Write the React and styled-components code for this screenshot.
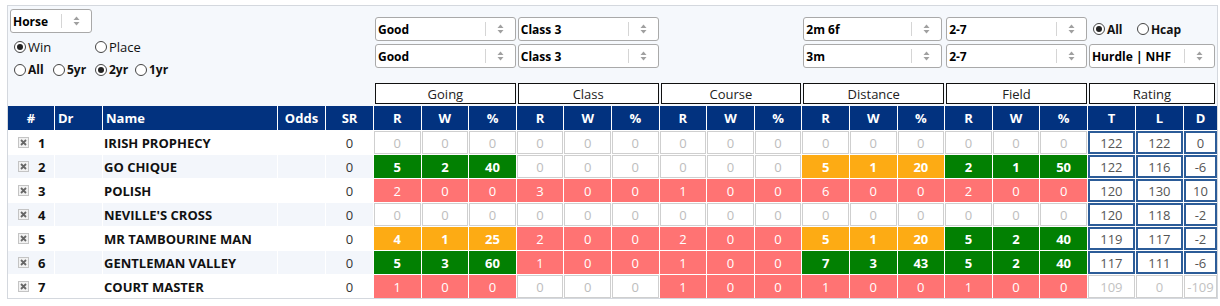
import React from 'react';
import styled, { createGlobalStyle, css } from 'styled-components';

const GlobalStyle = createGlobalStyle`
  body {
    margin: 0;
    background: #fff;
    font-family: "Open Sans", "Liberation Sans", sans-serif;
    color: #111;
  }
`;

const COLS = '46px 47px 174px 47px 47px repeat(15, 46.6px) 47px 47px 1fr';

const Panel = styled.div`
  width: 1209px;
  margin: 5px 0 0 7px;
  border: 1px solid #d4d8de;
  background: #f5f8fc;
`;

const Top = styled.div`
  display: grid;
  grid-template-columns: ${COLS};
  grid-template-rows: 8px 24px 24px 9px 21px;
  column-gap: 1px;
  row-gap: 3px;
`;

const LeftControls = styled.div`
  grid-column: 1 / span 5;
  grid-row: 1 / span 5;
  padding: 3px 0 0 1px;
  display: flex;
  flex-direction: column;
  align-items: flex-start;
`;

const SelectBox = styled.div`
  grid-column: ${({ $col }) => $col} / span ${({ $span }) => $span || 3};
  grid-row: ${({ $row }) => $row};
  margin: 0 ${({ $mr }) => $mr || 0}px 0 1px;
  width: ${({ $w }) => ($w ? `${$w}px` : 'auto')};
  height: 24px;
  box-sizing: border-box;
  display: flex;
  align-items: center;
  background: #fff;
  border: 1px solid #a9a9a9;
  border-radius: 3px;
  font-size: 12px;
  font-weight: 700;
  color: #000;
`;

const SelectLabel = styled.span`
  flex: 1;
  padding-left: 2px;
  white-space: nowrap;
`;

const SelectDivider = styled.span`
  width: 1px;
  height: 14px;
  background: #d5d5d5;
`;

const SelectArrows = styled.span`
  width: 29px;
  display: flex;
  justify-content: center;
  align-items: center;
`;

const Select = ({ label, ...rest }) => (
  <SelectBox {...rest}>
    <SelectLabel>{label}</SelectLabel>
    <SelectDivider />
    <SelectArrows>
      <svg width="7" height="10" viewBox="0 0 7 10">
        <path d="M3.5 0.5 L6.5 4 L0.5 4 Z" fill="#a0a0a0" />
        <path d="M3.5 9.5 L6.5 6 L0.5 6 Z" fill="#a0a0a0" />
      </svg>
    </SelectArrows>
  </SelectBox>
);

const RadioRow = styled.div`
  display: flex;
  align-items: center;
  margin-top: ${({ $mt }) => $mt}px;
  padding-left: 5px;
`;

const RadioItem = styled.label`
  display: inline-flex;
  align-items: center;
  width: ${({ $w }) => $w}px;
  font-size: ${({ $bold }) => ($bold ? 12 : 13)}px;
  font-weight: ${({ $bold }) => ($bold ? 700 : 400)};
  color: #111;
  white-space: nowrap;
`;

const Circle = styled.span`
  width: 10px;
  height: 10px;
  border: 1px solid #444;
  border-radius: 50%;
  background: #fff;
  margin-right: 2px;
  display: inline-flex;
  align-items: center;
  justify-content: center;
  flex: none;

  ${({ $on }) =>
    $on &&
    css`
      &::after {
        content: '';
        width: 6px;
        height: 6px;
        border-radius: 50%;
        background: #222;
      }
    `}
`;

const Radio = ({ label, on, w, bold }) => (
  <RadioItem $w={w} $bold={bold}>
    <Circle $on={on} />
    {label}
  </RadioItem>
);

const TypeRadios = styled.div`
  grid-column: 21 / span 3;
  grid-row: 2;
  display: flex;
  align-items: center;
  padding-left: 5px;
`;

const GroupBox = styled.div`
  grid-column: ${({ $col }) => $col} / span 3;
  grid-row: 5;
  margin: 0 ${({ $mr }) => $mr || 0}px 0 1px;
  box-sizing: border-box;
  border: 1px solid #111;
  background: #fff;
  display: flex;
  align-items: center;
  justify-content: center;
  font-size: 13px;
  color: #222;
`;

const Table = styled.div`
  margin-top: 2px;
  display: grid;
  grid-template-columns: ${COLS};
  grid-auto-rows: 23px;
  grid-template-rows: 24px;
  gap: 1px;
  background: #fff;
`;

const Head = styled.div`
  background: #02327f;
  color: #fff;
  font-weight: 700;
  font-size: 13px;
  display: flex;
  align-items: center;
  justify-content: ${({ $left }) => ($left ? 'flex-start' : 'center')};
  padding-left: ${({ $left }) => ($left ? 3 : 0)}px;
`;

const InfoCell = styled.div`
  background: ${({ $alt }) => ($alt ? '#f3f6fb' : '#fff')};
  display: flex;
  align-items: center;
  justify-content: ${({ $align }) => $align || 'flex-start'};
  padding-left: ${({ $pl }) => $pl || 0}px;
  font-size: 13px;
  font-weight: ${({ $bold }) => ($bold ? 700 : 400)};
  color: ${({ $bold }) => ($bold ? '#111' : '#333')};
  white-space: nowrap;
  overflow: hidden;
`;

const RemoveIcon = styled.span`
  display: inline-flex;
  margin-right: 9px;
`;

const statColors = {
  g: { bg: '#028002', fg: '#fff', w: 700 },
  o: { bg: '#fdab14', fg: '#fff', w: 700 },
  r: { bg: '#ff7373', fg: '#fff', w: 400 },
  z: { bg: '#fff', fg: '#bdbdbd', w: 400 },
};

const StatCell = styled.div`
  display: flex;
  align-items: center;
  justify-content: center;
  font-size: 13px;
  background: ${({ $k }) => statColors[$k].bg};
  color: ${({ $k }) => statColors[$k].fg};
  font-weight: ${({ $k }) => statColors[$k].w};
  box-shadow: ${({ $k }) => ($k === 'z' ? 'inset 0 0 0 1px #cfcfcf' : 'none')};
`;

const RatingCell = styled.div`
  display: flex;
  align-items: center;
  justify-content: center;
  font-size: 13px;
  background: #fff;
  color: ${({ $muted }) => ($muted ? '#c2c2c2' : '#555')};
  box-shadow: inset 0 0 0 ${({ $muted }) => ($muted ? '1px #cfcfcf' : '2px #2c5c98')};
  overflow: hidden;
  white-space: nowrap;
`;

const Xbox = () => (
  <svg width="11" height="11" viewBox="0 0 11 11">
    <rect x="0.5" y="0.5" width="10" height="10" fill="#f2f2f2" stroke="#c4c4c4" />
    <path d="M3 3 L8 8 M8 3 L3 8" stroke="#666" strokeWidth="1.8" />
  </svg>
);

const runners = [
  { n: 1, name: 'IRISH PROPHECY', stats: ['z000', 'z000', 'z000', 'z000', 'z000'], rt: ['122', '122', '0'] },
  { n: 2, name: 'GO CHIQUE', stats: ['g5 2 40', 'z000', 'z000', 'o5 1 20', 'g2 1 50'], rt: ['122', '116', '-6'] },
  { n: 3, name: 'POLISH', stats: ['r2 0 0', 'r3 0 0', 'r1 0 0', 'r6 0 0', 'r2 0 0'], rt: ['120', '130', '10'] },
  { n: 4, name: "NEVILLE'S CROSS", stats: ['z000', 'z000', 'z000', 'z000', 'z000'], rt: ['120', '118', '-2'] },
  { n: 5, name: 'MR TAMBOURINE MAN', stats: ['o4 1 25', 'r2 0 0', 'r2 0 0', 'o5 1 20', 'g5 2 40'], rt: ['119', '117', '-2'] },
  { n: 6, name: 'GENTLEMAN VALLEY', stats: ['g5 3 60', 'r1 0 0', 'r1 0 0', 'g7 3 43', 'g5 2 40'], rt: ['117', '111', '-6'] },
  { n: 7, name: 'COURT MASTER', stats: ['r1 0 0', 'z000', 'r1 0 0', 'r1 0 0', 'r1 0 0'], rt: ['109', '0', '-109'], muted: true },
];

const parseStat = (s) => {
  const k = s[0];
  const vals = k === 'z' ? ['0', '0', '0'] : s.slice(1).split(' ');
  return { k, vals };
};

const groups = [
  { name: 'Going', col: 6 },
  { name: 'Class', col: 9 },
  { name: 'Course', col: 12 },
  { name: 'Distance', col: 15 },
  { name: 'Field', col: 18 },
];

export default function App() {
  return (
    <>
      <GlobalStyle />
      <Panel>
        <Top>
          <LeftControls>
            <Select label="Horse" $w={82} />
            <RadioRow $mt={5}>
              <Radio label="Win" on w={81} />
              <Radio label="Place" w={60} />
            </RadioRow>
            <RadioRow $mt={5}>
              <Radio label="All" w={39} bold />
              <Radio label="5yr" w={42} bold />
              <Radio label="2yr" on w={40} bold />
              <Radio label="1yr" w={40} bold />
            </RadioRow>
          </LeftControls>

          <Select label="Good" $col={6} $row={2} />
          <Select label="Good" $col={6} $row={3} />
          <Select label="Class 3" $col={9} $row={2} />
          <Select label="Class 3" $col={9} $row={3} />
          <Select label="2m 6f" $col={15} $row={2} $mr={2} />
          <Select label="3m" $col={15} $row={3} $mr={2} />
          <Select label="2-7" $col={18} $row={2} />
          <Select label="2-7" $col={18} $row={3} />
          <TypeRadios>
            <Radio label="All" on w={44} bold />
            <Radio label="Hcap" w={50} bold />
          </TypeRadios>
          <Select label="Hurdle | NHF" $col={21} $row={3} $mr={2} />

          {groups.map((g) => (
            <GroupBox key={g.name} $col={g.col}>
              {g.name}
            </GroupBox>
          ))}
          <GroupBox $col={21} $mr={2}>
            Rating
          </GroupBox>
        </Top>

        <Table>
          <Head>#</Head>
          <Head $left>Dr</Head>
          <Head $left>Name</Head>
          <Head>Odds</Head>
          <Head>SR</Head>
          {groups.flatMap((g) =>
            ['R', 'W', '%'].map((h) => <Head key={g.name + h}>{h}</Head>)
          )}
          <Head>T</Head>
          <Head>L</Head>
          <Head>D</Head>

          {runners.map((r, i) => {
            const alt = i % 2 === 1;
            return (
              <React.Fragment key={r.n}>
                <InfoCell $alt={alt} $pl={10} $bold>
                  <RemoveIcon>
                    <Xbox />
                  </RemoveIcon>
                  {r.n}
                </InfoCell>
                <InfoCell $alt={alt} />
                <InfoCell $alt={alt} $pl={1} $bold>
                  {r.name}
                </InfoCell>
                <InfoCell $alt={alt} />
                <InfoCell $alt={alt} $align="center">
                  0
                </InfoCell>
                {r.stats.flatMap((s, gi) => {
                  const { k, vals } = parseStat(s);
                  return vals.map((v, vi) => (
                    <StatCell key={`${gi}-${vi}`} $k={k}>
                      {v}
                    </StatCell>
                  ));
                })}
                {r.rt.map((v, ri) => (
                  <RatingCell key={ri} $muted={r.muted}>
                    {v}
                  </RatingCell>
                ))}
              </React.Fragment>
            );
          })}
        </Table>
      </Panel>
    </>
  );
}
